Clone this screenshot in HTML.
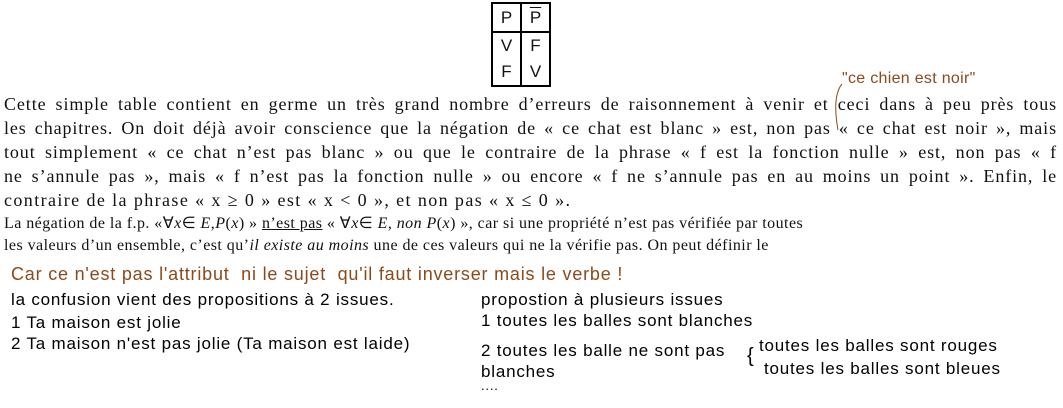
<!DOCTYPE html>
<html><head><meta charset="utf-8"><style>
body{margin:0;width:1063px;height:408px;background:#fff;position:relative;overflow:hidden;font-family:"Liberation Serif",serif;color:#111}
.l{position:absolute;left:4px;width:1053px;font-size:18px;letter-spacing:0.9px;white-space:nowrap;text-align:justify;text-align-last:justify}
.t{position:absolute;left:4px;font-size:16px;letter-spacing:0.45px;white-space:nowrap}
.a{position:absolute;font-family:"Liberation Sans",sans-serif;font-size:17px;letter-spacing:0.8px;white-space:nowrap;color:#000}
.o{color:#8b4a1c}
table{position:absolute;left:491px;top:2px;border-collapse:collapse;font-family:"Liberation Sans",sans-serif;font-size:17px}
td{border-left:2px solid #000;border-right:2px solid #000;width:27px;text-align:center;height:26px;padding:0}
tr.h td{border-top:2px solid #000;border-bottom:2px solid #000;height:27px}
tr.b td{border-bottom:2px solid #000}
</style></head><body>
<table><tr class="h"><td>P</td><td><span style="text-decoration:overline">P</span></td></tr>
<tr><td>V</td><td>F</td></tr><tr class="b"><td>F</td><td>V</td></tr></table>
<div class="a o" style="left:842px;top:70px;font-size:16px;letter-spacing:0.3px">"ce chien est noir"</div>
<svg style="position:absolute;left:830px;top:82px" width="20" height="50"><path d="M12 2 Q2 14 8 48" stroke="#8b4a1c" fill="none" stroke-width="1"/></svg>
<div class="l" style="top:94px">Cette simple table contient en germe un très grand nombre d’erreurs de raisonnement à venir et ceci dans à peu près tous</div>
<div class="l" style="top:118px">les chapitres. On doit déjà avoir conscience que la négation de « ce chat est blanc » est, non pas « ce chat est noir », mais</div>
<div class="l" style="top:142px">tout simplement « ce chat n’est pas blanc » ou que le contraire de la phrase « f est la fonction nulle » est, non pas « f</div>
<div class="l" style="top:166px">ne s’annule pas », mais « f n’est pas la fonction nulle » ou encore « f ne s’annule pas en au moins un point ». Enfin, le</div>
<div class="l" style="top:190px;width:auto;text-align:left;letter-spacing:1.4px">contraire de la phrase « x ≥ 0 » est « x &lt; 0 », et non pas « x ≤ 0 ».</div>
<div class="t" style="top:213px">La négation de la f.p. «∀<i>x</i>∈ <i>E</i>,<i>P</i>(<i>x</i>) » <u>n’est pas</u> « ∀<i>x</i>∈ <i>E</i>, <i>non P</i>(<i>x</i>) », car si une propriété n’est pas vérifiée par toutes</div>
<div class="t" style="top:237px">les valeurs d’un ensemble, c’est qu’<i>il existe au moins</i> une de ces valeurs qui ne la vérifie pas. On peut définir le</div>
<div class="a o" style="left:11px;top:264px;font-size:18px">Car ce n'est pas l'attribut &nbsp;ni le sujet &nbsp;qu'il faut inverser mais le verbe !</div>
<div class="a" style="left:11px;top:290px">la confusion vient des propositions à 2 issues.</div>
<div class="a" style="left:11px;top:313px">1 Ta maison est jolie</div>
<div class="a" style="left:11px;top:334px">2 Ta maison n'est pas jolie (Ta maison est laide)</div>
<div class="a" style="left:481px;top:290px">propostion à plusieurs issues</div>
<div class="a" style="left:481px;top:311px">1 toutes les balles sont blanches</div>
<div class="a" style="left:481px;top:341px">2 toutes les balle ne sont pas</div>
<div class="a" style="left:481px;top:362px">blanches</div>
<div class="a" style="left:481px;top:378px;font-size:13px">....</div>
<div class="a" style="left:747px;top:345px;font-size:20px">{</div>
<div class="a" style="left:759px;top:336px">toutes les balles sont rouges</div>
<div class="a" style="left:764px;top:359px">toutes les balles sont bleues</div>
</body></html>
